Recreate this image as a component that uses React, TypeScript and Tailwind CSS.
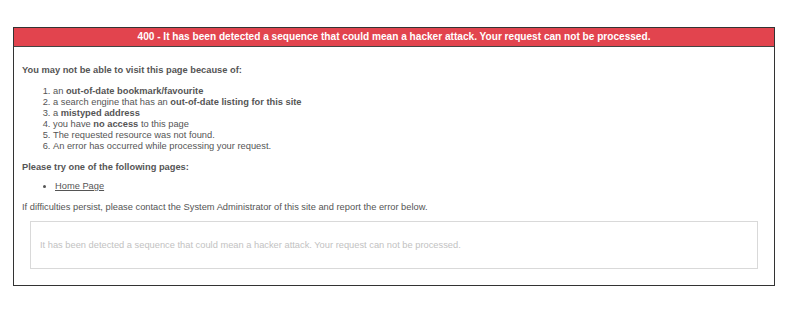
const reasons = [
  <>an <b>out-of-date bookmark/favourite</b></>,
  <>a search engine that has an <b>out-of-date listing for this site</b></>,
  <>a <b>mistyped address</b></>,
  <>you have <b>no access</b> to this page</>,
  <>The requested resource was not found.</>,
  <>An error has occurred while processing your request.</>,
]

const message =
  'It has been detected a sequence that could mean a hacker attack. Your request can not be processed.'

export default function App() {
  return (
    <div className="h-[336px] w-[800px] bg-white pl-[13px] pt-[27px] font-['Liberation_Sans',Arial,sans-serif]">
      <div className="w-[762px] border border-[#333]">
        <div className="h-[19px] border-b border-[#444] bg-[#e2444e] text-center text-[10.1px] font-bold leading-[18px] text-white">
          400 - {message}
        </div>

        <div className="px-[8px] pb-[16px] pt-[18px] text-[9.3px] leading-[11px] text-[#555]">
          <p className="font-bold">You may not be able to visit this page because of:</p>

          <ol className="mt-[10px] list-decimal pl-[31px]">
            {reasons.map((r, i) => (
              <li key={i}>{r}</li>
            ))}
          </ol>

          <p className="mt-[10px] font-bold">Please try one of the following pages:</p>

          <ul className="mt-[8px] list-disc pl-[33px]">
            <li>
              <a className="underline">Home Page</a>
            </li>
          </ul>

          <p className="mt-[10px]">
            If difficulties persist, please contact the System Administrator of this site and
            report the error below.
          </p>

          <div className="mx-[8px] mt-[8px] flex h-[48px] items-center border border-[#d9d9d9] pl-[9px] text-[#c2c2c2]">
            {message}
          </div>
        </div>
      </div>
    </div>
  )
}
